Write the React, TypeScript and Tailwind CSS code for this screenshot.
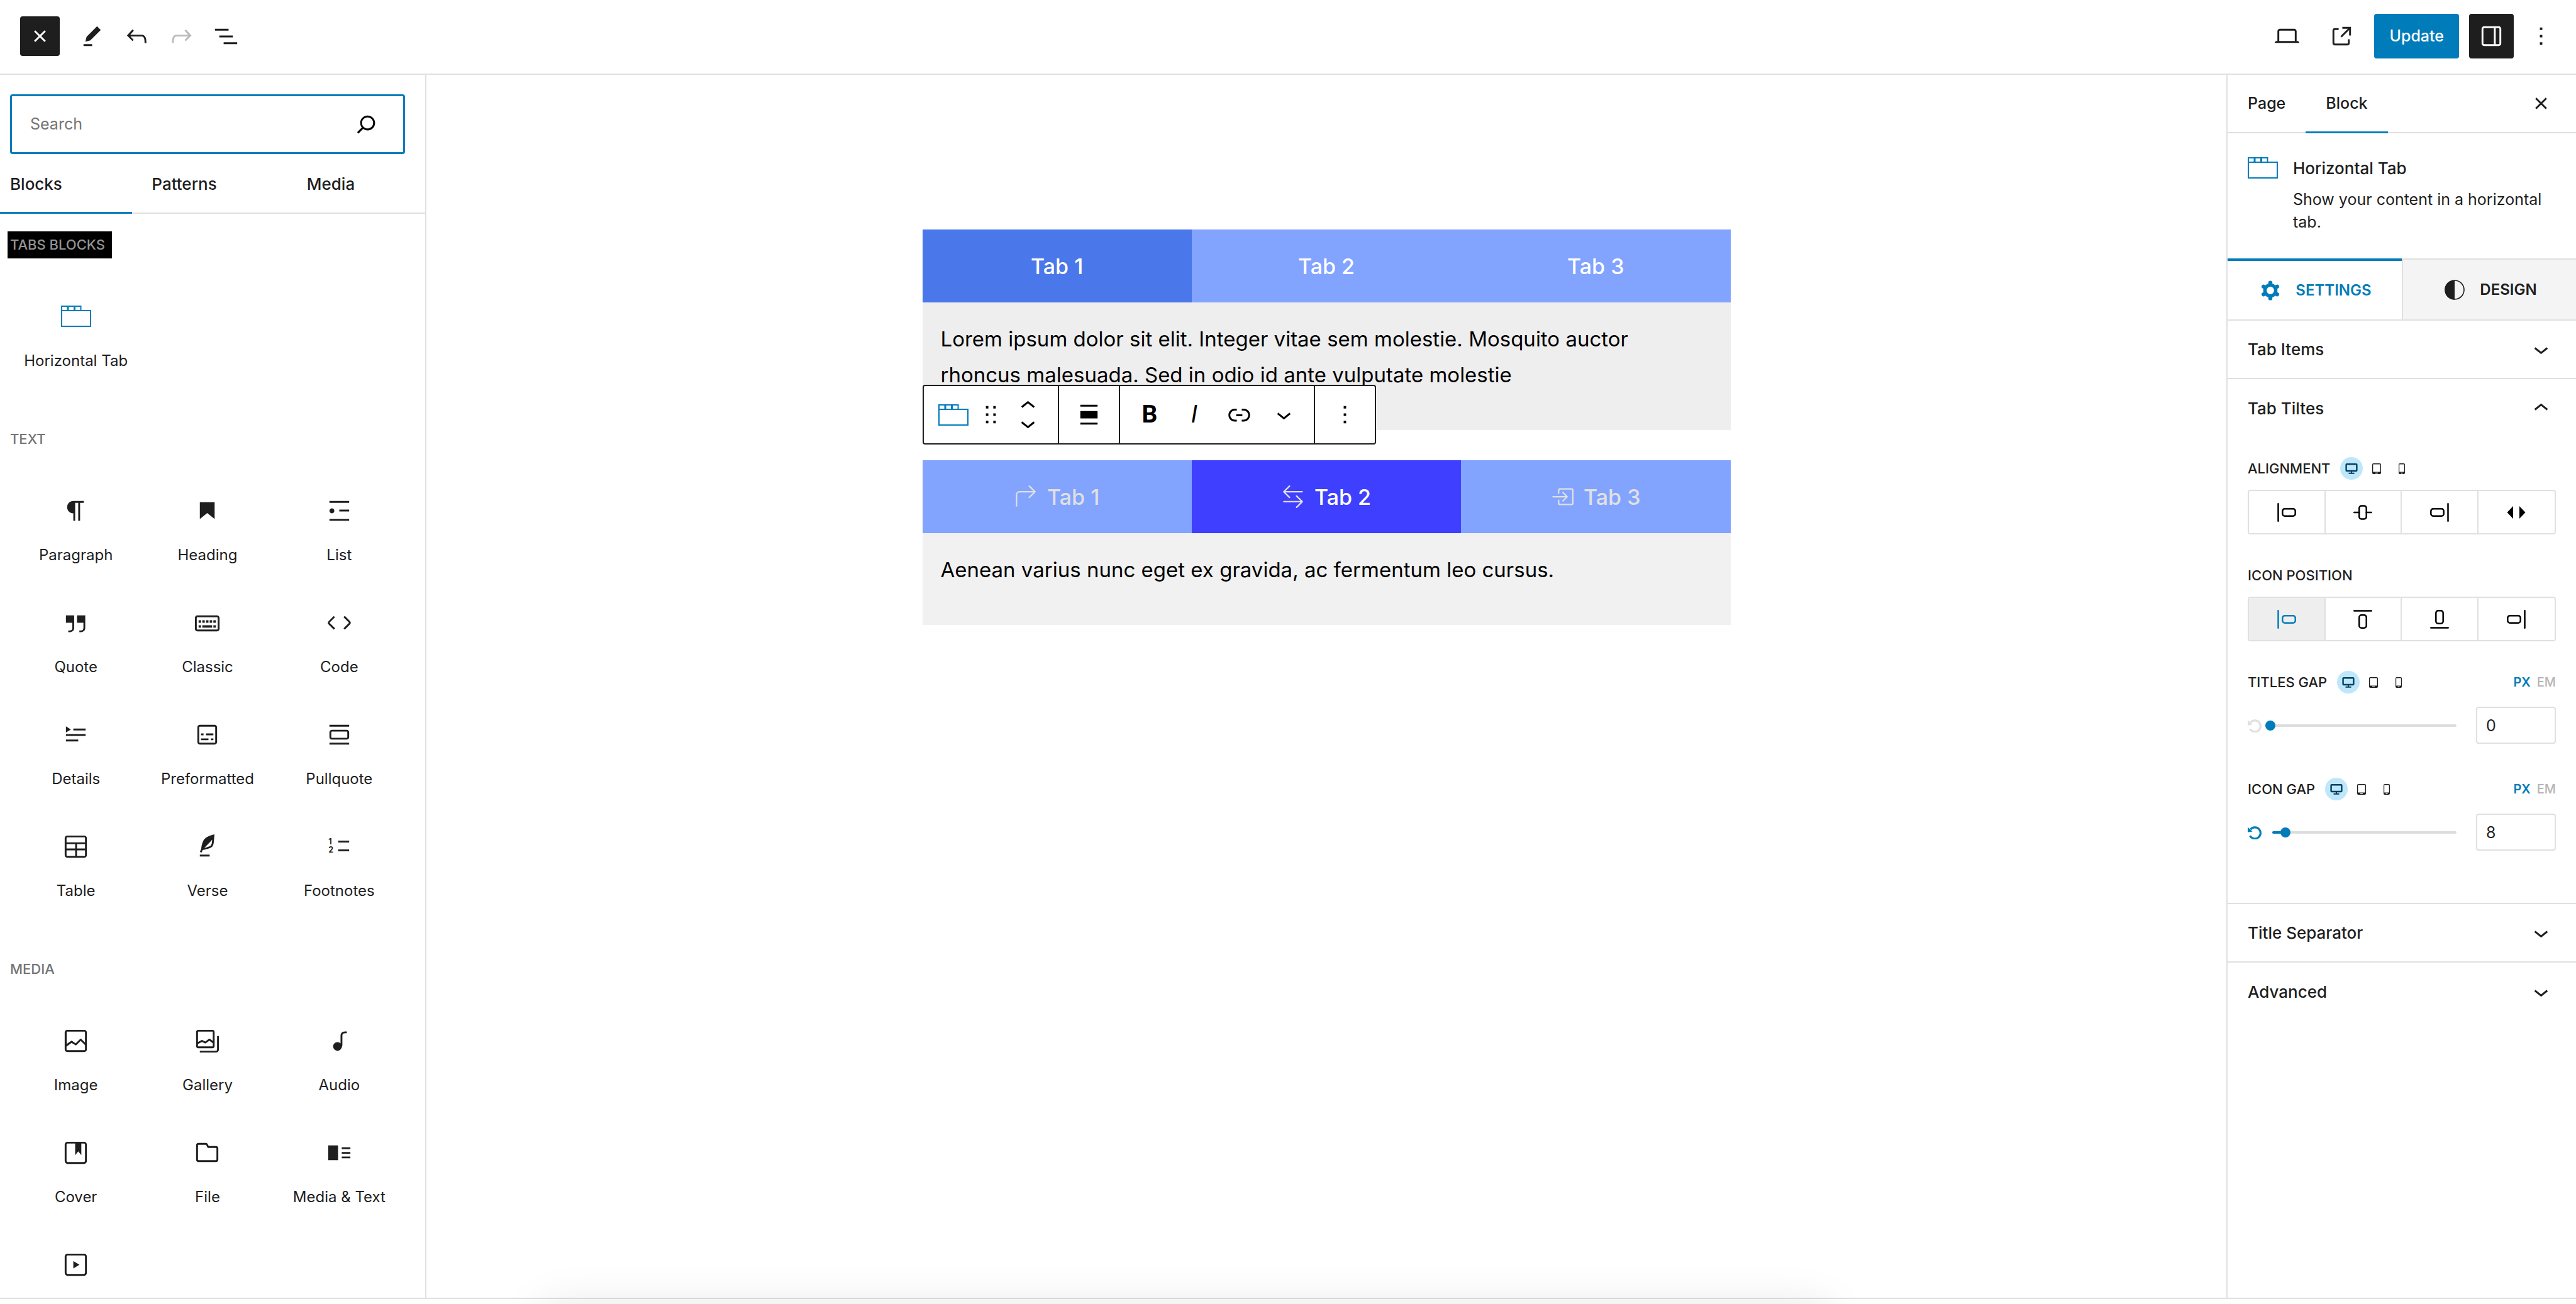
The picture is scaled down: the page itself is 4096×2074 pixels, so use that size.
import { useState } from "react";
import type { ReactNode } from "react";
import { BsArrow90DegRight, BsArrowLeftRight, BsBoxArrowInRight } from "react-icons/bs";

const paths = {
  close:
    "M12 13.06l3.712 3.713 1.061-1.06L13.061 12l3.712-3.712-1.06-1.06L12 10.938 8.288 7.227l-1.061 1.06L10.939 12l-3.712 3.712 1.06 1.061L12 13.061z",
  edit: "m19 7-3-3-8.5 8.5-1 4 4-1L19 7Zm-7 11.5H5V20h7v-1.5Z",
  undo: "M18.3 11.7c-.6-.6-1.4-.9-2.3-.9H6.7l2.9-3.3-1.1-1-4.5 5L8.5 16l1-1-2.7-2.7H16c.5 0 .9.2 1.3.5 1 1 1 3.4 1 4.5v.3h1.5v-.2c0-1.5 0-4.3-1.5-5.7z",
  redo: "M15.6 6.5l-1.1 1 2.9 3.3H8c-.9 0-1.7.3-2.3.9-1.4 1.5-1.4 4.2-1.4 5.6v.2h1.5v-.3c0-1.1 0-3.5 1-4.5.3-.3.7-.5 1.3-.5h9.2L14.5 15l1.1 1.1 4.6-4.6-4.6-5z",
  listView: "M3 6h11v1.5H3V6Zm3.5 5.5h11V13h-11v-1.5ZM21 17H10v1.5h11V17Z",
  laptop:
    "M20.5 16h-.7V8c0-1.1-.9-2-2-2H6.2c-1.1 0-2 .9-2 2v8h-.7c-.8 0-1.5.7-1.5 1.5h20c0-.8-.7-1.5-1.5-1.5zM5.7 8c0-.3.2-.5.5-.5h11.6c.3 0 .5.2.5.5v8H5.7V8z",
  external:
    "M19.5 4.5h-7V6h4.44l-5.97 5.97 1.06 1.06L18 7.06v4.44h1.5v-7Zm-13 1a2 2 0 0 0-2 2v10a2 2 0 0 0 2 2h10a2 2 0 0 0 2-2v-3H17v3a.5.5 0 0 1-.5.5h-10a.5.5 0 0 1-.5-.5v-10a.5.5 0 0 1 .5-.5h3V5.5h-3Z",
  drawer:
    "M18 4H6c-1.1 0-2 .9-2 2v12c0 1.1.9 2 2 2h12c1.1 0 2-.9 2-2V6c0-1.1-.9-2-2-2zm-4 14.5H6c-.3 0-.5-.2-.5-.5V6c0-.3.2-.5.5-.5h8v13zm4.5-.5c0 .3-.2.5-.5.5h-2.5v-13H18c.3 0 .5.2.5.5v12z",
  more: "M13 19h-2v-2h2v2zm0-6h-2v-2h2v2zm0-6h-2V5h2v2z",
  search:
    "M13 5c-3.3 0-6 2.7-6 6 0 1.4.5 2.7 1.3 3.7l-3.8 3.8 1.1 1.1 3.8-3.8c1 .8 2.3 1.3 3.7 1.3 3.3 0 6-2.7 6-6S16.3 5 13 5zm0 10.5c-2.5 0-4.5-2-4.5-4.5s2-4.5 4.5-4.5 4.5 2 4.5 4.5-2 4.5-4.5 4.5z",
  paragraph:
    "m9.99609 14v-.2251l.00391.0001v6.225h1.5v-14.5h2.5v14.5h1.5v-14.5h3v-1.5h-8.50391c-2.76142 0-5 2.23858-5 5 0 2.7614 2.23858 5 5 5z",
  heading: "M6 5V18.5911L12 13.8473L18 18.5911V5H6Z",
  list: "M4 4v1.5h16V4H4zm8 8.5h8V11h-8v1.5zM4 20h16v-1.5H4V20zm4-8c0-1.1-.9-2-2-2s-2 .9-2 2 .9 2 2 2 2-.9 2-2z",
  quote:
    "M13 6v6h5.2v4c0 .8-.2 1.4-.5 1.7-.6.6-1.6.6-2.5.5h-.3v1.5h.5c1 0 2.3-.1 3.3-1 .6-.6 1-1.6 1-2.8V6H13zm-9 6h5.2v4c0 .8-.2 1.4-.5 1.7-.6.6-1.6.6-2.5.5h-.3v1.5h.5c1 0 2.3-.1 3.3-1 .6-.6 1-1.6 1-2.8V6H4v6z",
  classic:
    "M20 6H4c-1.1 0-2 .9-2 2v9c0 1.1.9 2 2 2h16c1.1 0 2-.9 2-2V8c0-1.1-.9-2-2-2zm.5 11c0 .3-.2.5-.5.5H4c-.3 0-.5-.2-.5-.5V8c0-.3.2-.5.5-.5h16c.3 0 .5.2.5.5v9zM10 10H8v2h2v-2zm-5 2h2v-2H5v2zm8-2h-2v2h2v-2zm-5 6h8v-2H8v2zm6-4h2v-2h-2v2zm3 0h2v-2h-2v2zm0 4h2v-2h-2v2zM5 16h2v-2H5v2z",
  code: "M20.8 10.7l-4.3-4.3-1.1 1.1 4.3 4.3c.1.1.1.3 0 .4l-4.3 4.3 1.1 1.1 4.3-4.3c.7-.8.7-1.9 0-2.6zM4.2 11.8l4.3-4.3-1-1-4.3 4.3c-.7.7-.7 1.8 0 2.5l4.3 4.3 1.1-1.1-4.3-4.3c-.2-.1-.2-.3-.1-.4z",
  details: "M4 16h10v1.5H4V16Zm0-4.5h16V13H4v-1.5ZM10 7h10v1.5H10V7ZM4 5.25l4 2.5-4 2.5v-5Z",
  preformatted:
    "M18 4H6c-1.1 0-2 .9-2 2v12c0 1.1.9 2 2 2h12c1.1 0 2-.9 2-2V6c0-1.1-.9-2-2-2zm.5 14c0 .3-.2.5-.5.5H6c-.3 0-.5-.2-.5-.5V6c0-.3.2-.5.5-.5h12c.3 0 .5.2.5.5v12zM7 16.5h6V15H7v1.5zm4-4h6V11h-6v1.5zM9 11H7v1.5h2V11zm6 5.5h2V15h-2v1.5z",
  pullquote:
    "M18 8H6c-1.1 0-2 .9-2 2v4c0 1.1.9 2 2 2h12c1.1 0 2-.9 2-2v-4c0-1.1-.9-2-2-2zm.5 6c0 .3-.2.5-.5.5H6c-.3 0-.5-.2-.5-.5v-4c0-.3.2-.5.5-.5h12c.3 0 .5.2.5.5v4zM4 4v1.5h16V4H4zm0 16h16v-1.5H4V20z",
  table:
    "M19 3H5c-1.1 0-2 .9-2 2v14c0 1.1.9 2 2 2h14c1.1 0 2-.9 2-2V5c0-1.1-.9-2-2-2zM5 4.5h14c.3 0 .5.2.5.5v3.5h-15V5c0-.3.2-.5.5-.5zm8 5.5h6.5v3.5H13V10zm-1.5 3.5h-7V10h7v3.5zm-7 5.5v-4h7v4.5H5c-.3 0-.5-.2-.5-.5zm14.5.5h-6V15h6.5v4c0 .3-.2.5-.5.5z",
  verse:
    "M17.8 2l-.9.3c-.1 0-3.6 1-5.2 2.1C10 5.5 9.3 6.5 8.9 7.1c-.6.9-1.7 4.7-1.7 6.3l-.9 2.3c-.2.4 0 .8.4 1 .1 0 .2.1.3.1.3 0 .6-.2.7-.5l.6-1.5c.3 0 .7-.1 1.2-.2.7-.1 1.4-.3 2.2-.5.8-.2 1.6-.5 2.4-.8.7-.3 1.4-.7 1.9-1.2s.8-1.2 1-1.9c.2-.7.3-1.6.4-2.4.1-.8.1-1.7.2-2.5 0-.8.1-1.5.2-2.1V2zm-1.9 5.6c-.1.8-.2 1.5-.3 2.1-.2.6-.4 1-.6 1.3-.3.3-.8.6-1.4.9-.7.3-1.4.5-2.2.8-.6.2-1.3.3-1.8.4L15 7.5c.3-.3.6-.7 1-1.1 0 .4 0 .8-.1 1.2zM6 20h8v-1.5H6V20z",
  image:
    "M19 3H5c-1.1 0-2 .9-2 2v14c0 1.1.9 2 2 2h14c1.1 0 2-.9 2-2V5c0-1.1-.9-2-2-2zM5 4.5h14c.3 0 .5.2.5.5v8.4l-3-2.9c-.3-.3-.8-.3-1 0L11.9 14 9 12c-.3-.2-.6-.2-.8 0l-3.6 2.6V5c-.1-.3.1-.5.4-.5zm14 15H5c-.3 0-.5-.2-.5-.5v-2.4l4.1-3 3 1.9c.3.2.7.2.9-.1L16 12l3.5 3.4V19c0 .3-.2.5-.5.5z",
  gallery:
    "M16.375 4.5H4.625a.125.125 0 0 0-.125.125v8.254l2.859-1.54a.75.75 0 0 1 .68-.016l2.384 1.142 2.89-2.074a.75.75 0 0 1 .874 0l2.313 1.66V4.625a.125.125 0 0 0-.125-.125Zm.125 9.398-2.75-1.975-2.813 2.02a.75.75 0 0 1-.76.067l-2.444-1.17L4.5 14.583v1.792c0 .069.056.125.125.125h11.75a.125.125 0 0 0 .125-.125v-2.477ZM4.625 3C3.728 3 3 3.728 3 4.625v11.75C3 17.273 3.728 18 4.625 18h11.75c.898 0 1.625-.727 1.625-1.625V4.625C18 3.728 17.273 3 16.375 3H4.625ZM20 8v11c0 .69-.31 1-.999 1H6v1.5h13.001c1.52 0 2.499-.982 2.499-2.5V8H20Z",
  audio:
    "M17.7 4.3c-1.2 0-2.8 0-3.8 1-.6.6-.9 1.5-.9 2.6V14c-.6-.6-1.5-1-2.5-1C8.6 13 7 14.6 7 16.5S8.6 20 10.5 20c1.5 0 2.8-1 3.3-2.3.5-.8.7-1.8.7-2.5V7.9c0-.7.2-1.2.5-1.6.6-.6 1.8-.6 2.8-.6h.3V4.3h-.4z",
  cover:
    "M18.7 3H5.3C4 3 3 4 3 5.3v13.4C3 20 4 21 5.3 21h13.4c1.3 0 2.3-1 2.3-2.3V5.3C21 4 20 3 18.7 3zm.8 15.7c0 .4-.4.8-.8.8H5.3c-.4 0-.8-.4-.8-.8V5.3c0-.4.4-.8.8-.8h6.2v9.4l2.5-3.1 2.5 3.1V4.5h2.2c.4 0 .8.4.8.8v13.4z",
  file: "M12.848 8a1 1 0 0 1-.914-.594l-.723-1.63a.5.5 0 0 0-.447-.276H5a.5.5 0 0 0-.5.5v11.5a.5.5 0 0 0 .5.5h14a.5.5 0 0 0 .5-.5v-9A.5.5 0 0 0 19 8h-6.152Zm.612-1.5a.5.5 0 0 1-.462-.31l-.445-1.084A2 2 0 0 0 10.763 4H5a2 2 0 0 0-2 2v11.5a2 2 0 0 0 2 2h14a2 2 0 0 0 2-2v-9a2 2 0 0 0-2-2h-5.54Z",
  mediaText: "M3 18h8V6H3v12zM14 7.5V9h7V7.5h-7zm0 5.3h7v-1.5h-7v1.5zm0 3.7h7V15h-7v1.5z",
  video:
    "M18.7 3H5.3C4 3 3 4 3 5.3v13.4C3 20 4 21 5.3 21h13.4c1.3 0 2.3-1 2.3-2.3V5.3C21 4 20 3 18.7 3zm.8 15.7c0 .4-.4.8-.8.8H5.3c-.4 0-.8-.4-.8-.8V5.3c0-.4.4-.8.8-.8h13.4c.4 0 .8.4.8.8v13.4zM10 15l5-3-5-3v6z",
  down: "M17.5 11.6L12 16l-5.5-4.4.9-1.2L12 14l4.5-3.6 1 1.2z",
  up: "M6.5 12.4L12 8l5.5 4.4-.9 1.2L12 10l-4.5 3.6-1-1.2z",
  drag: "M8 7h2V5H8v2zm0 6h2v-2H8v2zm0 6h2v-2H8v2zm6-14v2h2V5h-2zm0 8h2v-2h-2v2zm0 6h2v-2h-2v2z",
  align: "M5 4h14v1.5H5V4zm0 14.5h14V20H5v-1.5zM5 9h14v6H5V9z",
  link: "M15.6 7.2H14v1.5h1.6c2 0 3.7 1.7 3.7 3.7s-1.7 3.7-3.7 3.7H14v1.5h1.6c2.8 0 5.2-2.3 5.2-5.2 0-2.9-2.3-5.2-5.2-5.2zM4.7 12.4c0-2 1.7-3.7 3.7-3.7H10V7.2H8.4c-2.9 0-5.2 2.3-5.2 5.2 0 2.9 2.3 5.2 5.2 5.2H10v-1.5H8.4c-2 0-3.7-1.7-3.7-3.7zm4.8.9h5v-1.5h-5v1.5z",
};

type IconName = keyof typeof paths;

function Icon({ name }: { name: IconName }) {
  return (
    <svg viewBox="0 0 24 24" className="size-[47px] shrink-0" fill="currentColor" fillRule="evenodd" aria-hidden="true">
      <path d={paths[name]} />
    </svg>
  );
}

function FootnotesIcon() {
  return (
    <svg viewBox="0 0 24 24" className="size-[47px] shrink-0" fill="currentColor" aria-hidden="true">
      <path d="M11.1 15.8H20v-1.5h-8.9v1.5zm0-8.6v1.5H20V7.2h-8.9z" />
      <text x="3.2" y="10" fontSize="6.4" fontWeight="700">1</text>
      <text x="3.2" y="17" fontSize="6.4" fontWeight="700">2</text>
    </svg>
  );
}

function TabsIcon() {
  return (
    <svg viewBox="0 0 48 34" className="h-[34px] w-12 shrink-0 text-[#007cba]" fill="none" stroke="currentColor" strokeWidth="2" aria-hidden="true">
      <rect x="1" y="8" width="46" height="25" />
      <rect x="1" y="1" width="9.5" height="7" />
      <rect x="11.5" y="1" width="9.5" height="7" />
      <rect x="22" y="1" width="9.5" height="7" />
    </svg>
  );
}

type Side = "left" | "center" | "right" | "top" | "bottom" | "full";

function SideIcon({ side }: { side: Side }) {
  return (
    <svg viewBox="0 0 30 30" className="size-[30px]" fill="none" stroke="currentColor" strokeWidth="2.5" strokeLinecap="round" aria-hidden="true">
      {side === "left" && (
        <>
          <path d="M1.5 1.3v27.4" />
          <rect x="8.3" y="9.3" width="20.4" height="11.4" rx="3.5" />
        </>
      )}
      {side === "right" && (
        <>
          <path d="M28.5 1.3v27.4" />
          <rect x="1.3" y="9.3" width="20.4" height="11.4" rx="3.5" />
        </>
      )}
      {side === "top" && (
        <>
          <path d="M1.3 1.5h27.4" />
          <rect x="9.3" y="8.3" width="11.4" height="20.4" rx="3.5" />
        </>
      )}
      {side === "bottom" && (
        <>
          <path d="M1.3 28.5h27.4" />
          <rect x="9.3" y="1.3" width="11.4" height="20.4" rx="3.5" />
        </>
      )}
      {side === "center" && (
        <>
          <path d="M1.3 15h8M20.7 15h8" />
          <rect x="9.3" y="4.5" width="11.4" height="21" rx="3.5" />
        </>
      )}
      {side === "full" && <path d="M0.5 15 10 5v20zM29.5 15 20 5v20z" fill="currentColor" stroke="none" />}
    </svg>
  );
}

function DeviceSwitch() {
  return (
    <div className="flex items-center gap-1">
      <button aria-label="Desktop" className="flex size-9 items-center justify-center rounded-full bg-[#bfe7fb] text-[#00405f]">
        <svg viewBox="0 0 20 17" className="h-[17px] w-5" fill="none" stroke="currentColor" strokeWidth="2.4" aria-hidden="true">
          <rect x="1.6" y="1.2" width="16.8" height="10.8" rx="1" />
          <path d="M10 12v3M5.5 15.8h9" strokeWidth="2" />
        </svg>
      </button>
      <button aria-label="Tablet" className="flex size-9 items-center justify-center">
        <svg viewBox="0 0 14 17" className="h-[17px] w-[14px]" fill="currentColor" fillRule="evenodd" aria-hidden="true">
          <path d="M2 0h10a2 2 0 0 1 2 2v13a2 2 0 0 1-2 2H2a2 2 0 0 1-2-2V2a2 2 0 0 1 2-2zM1.3 1.6v12h11.4v-12zM5 14.8v1.2h4v-1.2z" />
        </svg>
      </button>
      <button aria-label="Mobile" className="flex size-9 items-center justify-center">
        <svg viewBox="0 0 10 17" className="h-[17px] w-[10px]" fill="currentColor" fillRule="evenodd" aria-hidden="true">
          <path d="M2 0h6a2 2 0 0 1 2 2v13a2 2 0 0 1-2 2H2a2 2 0 0 1-2-2V2a2 2 0 0 1 2-2zM1.2 1.6v12h7.6v-12zM3.5 14.8v1.2h3v-1.2z" />
        </svg>
      </button>
    </div>
  );
}

function ToolButton({ label, children, className = "" }: { label: string; children: ReactNode; className?: string }) {
  return (
    <button aria-label={label} className={`flex h-[71px] w-[71px] items-center justify-center ${className}`}>
      {children}
    </button>
  );
}

function Header() {
  return (
    <header className="flex h-[119px] shrink-0 items-center justify-between border-b-2 border-[#e0e0e0] pr-5 pb-[2px] pl-8">
      <div className="flex items-center gap-5">
        <button aria-label="Toggle block inserter" className="flex size-[63px] items-center justify-center rounded-[4px] bg-[#1e1e1e] text-white">
          <Icon name="close" />
        </button>
        <div className="flex gap-2">
          <button aria-label="Tools" className="flex size-[63px] items-center justify-center"><Icon name="edit" /></button>
          <button aria-label="Undo" className="flex size-[63px] items-center justify-center"><Icon name="undo" /></button>
          <button aria-label="Redo" className="flex size-[63px] items-center justify-center text-[#bbbbbb]"><Icon name="redo" /></button>
          <button aria-label="Document overview" className="flex size-[63px] items-center justify-center"><Icon name="listView" /></button>
        </div>
      </div>
      <div className="flex items-center gap-4">
        <ToolButton label="View"><Icon name="laptop" /></ToolButton>
        <ToolButton label="View page"><Icon name="external" /></ToolButton>
        <button className="h-[71px] rounded-[4px] bg-[#007cba] px-6 text-[25px] font-medium text-white">Update</button>
        <div className="flex items-center gap-2">
          <ToolButton label="Settings" className="rounded-[4px] bg-[#1e1e1e] text-white"><Icon name="drawer" /></ToolButton>
          <ToolButton label="Options"><Icon name="more" /></ToolButton>
        </div>
      </div>
    </header>
  );
}

function BlockItem({ label, icon }: { label: string; icon: ReactNode }) {
  return (
    <button className="flex h-[178px] flex-col items-center pt-12 text-[24px] leading-[30px]">
      <span className="flex h-12 items-center">{icon}</span>
      <span className="mt-8 whitespace-nowrap">{label}</span>
    </button>
  );
}

const textBlocks: { label: string; icon: IconName | "footnotes" }[] = [
  { label: "Paragraph", icon: "paragraph" },
  { label: "Heading", icon: "heading" },
  { label: "List", icon: "list" },
  { label: "Quote", icon: "quote" },
  { label: "Classic", icon: "classic" },
  { label: "Code", icon: "code" },
  { label: "Details", icon: "details" },
  { label: "Preformatted", icon: "preformatted" },
  { label: "Pullquote", icon: "pullquote" },
  { label: "Table", icon: "table" },
  { label: "Verse", icon: "verse" },
  { label: "Footnotes", icon: "footnotes" },
];

const mediaBlocks: { label: string; icon: IconName }[] = [
  { label: "Image", icon: "image" },
  { label: "Gallery", icon: "gallery" },
  { label: "Audio", icon: "audio" },
  { label: "Cover", icon: "cover" },
  { label: "File", icon: "file" },
  { label: "Media & Text", icon: "mediaText" },
];

function Inserter() {
  return (
    <aside className="w-[678px] shrink-0 overflow-hidden border-r-2 border-[#e0e0e0]">
      <div className="pt-[31px] pr-8 pl-4">
        <label className="flex h-[95px] items-center rounded-[4px] border-3 border-[#007cba] pr-[35px] pl-[29px] text-black">
          <input type="search" aria-label="Search" placeholder="Search" className="min-w-0 flex-1 text-[25px] outline-none placeholder:text-[#757575]" />
          <Icon name="search" />
        </label>
      </div>
      <div role="tablist" className="relative flex h-[95px] border-b-2 border-[#e0e0e0] pt-[2px] text-[26px] font-medium">
        <button role="tab" aria-selected="true" className="w-[210px] pl-4 text-left">Blocks</button>
        <button role="tab" aria-selected="false" className="w-[166px]">Patterns</button>
        <button role="tab" aria-selected="false" className="flex-1">Media</button>
        <span className="absolute -bottom-[2px] left-0 h-[3px] w-[210px] bg-[#007cba]" />
      </div>
      <div className="flex flex-col gap-[68px] pt-7 pr-8 pl-4 text-[#1e1e1e]">
        <section>
          <h2 className="-ml-1 flex h-[43px] w-fit items-center bg-black pr-[11px] pl-1 text-[22px] font-medium text-[#949494]">TABS BLOCKS</h2>
          <div className="mt-5 grid grid-cols-3">
            <BlockItem label="Horizontal Tab" icon={<TabsIcon />} />
          </div>
        </section>
        <section>
          <h2 className="flex h-[43px] items-center text-[22px] font-medium text-[#757575]">TEXT</h2>
          <div className="mt-5 grid grid-cols-3">
            {textBlocks.map((b) => (
              <BlockItem key={b.label} label={b.label} icon={b.icon === "footnotes" ? <FootnotesIcon /> : <Icon name={b.icon} />} />
            ))}
          </div>
        </section>
        <section>
          <h2 className="flex h-[43px] items-center text-[22px] font-medium text-[#757575]">MEDIA</h2>
          <div className="mt-5 grid grid-cols-3">
            {mediaBlocks.map((b) => (
              <BlockItem key={b.label} label={b.label} icon={<Icon name={b.icon} />} />
            ))}
            <button aria-label="Video" className="flex h-[125px] flex-col items-center pt-12">
              <span className="flex h-12 items-center"><Icon name="video" /></span>
            </button>
          </div>
        </section>
      </div>
    </aside>
  );
}

function BlockToolbar() {
  return (
    <div role="toolbar" className="absolute bottom-full left-0 mb-[25px] flex h-[95px] divide-x-2 divide-[#1e1e1e] rounded-[4px] border-2 border-[#1e1e1e] bg-white">
      <div className="flex items-center gap-3 pr-6 pl-[23px]">
        <button aria-label="Horizontal Tab"><TabsIcon /></button>
        <button aria-label="Drag"><Icon name="drag" /></button>
        <div className="flex flex-col">
          <button aria-label="Move up" className="flex h-7 items-center"><Icon name="up" /></button>
          <button aria-label="Move down" className="flex h-7 items-center"><Icon name="down" /></button>
        </div>
      </div>
      <div className="flex items-center px-3">
        <ToolButton label="Align"><Icon name="align" /></ToolButton>
      </div>
      <div className="flex items-center px-3">
        <ToolButton label="Bold"><span className="font-['Roboto'] text-[39px] font-bold">B</span></ToolButton>
        <ToolButton label="Italic"><span className="font-['Roboto'] text-[39px] font-normal italic">I</span></ToolButton>
        <ToolButton label="Link"><Icon name="link" /></ToolButton>
        <ToolButton label="More"><Icon name="down" /></ToolButton>
      </div>
      <div className="flex items-center px-3">
        <ToolButton label="Options"><Icon name="more" /></ToolButton>
      </div>
    </div>
  );
}

function Canvas() {
  return (
    <main className="min-w-0 flex-1 pt-[246px]">
      <div className="mx-auto flex max-w-[1285px] flex-col gap-12 text-[34px] leading-[57px] text-black">
        <section>
          <div role="tablist" className="grid h-[116px] grid-cols-3 bg-[#82a4ff] font-medium text-white">
            <button role="tab" aria-selected="true" className="bg-[#4a77e9]">Tab 1</button>
            <button role="tab" aria-selected="false">Tab 2</button>
            <button role="tab" aria-selected="false">Tab 3</button>
          </div>
          <p className="bg-[#eeeeee] pt-[30px] pr-10 pb-[59px] pl-[29px] text-[33px]">
            Lorem ipsum dolor sit elit. Integer vitae sem molestie. Mosquito auctor rhoncus malesuada. Sed in odio id ante vulputate molestie
          </p>
        </section>
        <section className="relative">
          <BlockToolbar />
          <div role="tablist" className="grid h-[116px] grid-cols-3 bg-[#82a4ff] font-medium text-[#e0e0e0]">
            <button role="tab" aria-selected="false" className="flex items-center justify-center gap-4">
              <BsArrow90DegRight className="size-9" />Tab 1
            </button>
            <button role="tab" aria-selected="true" className="flex items-center justify-center gap-4 bg-[#3f3fff]">
              <BsArrowLeftRight className="size-9" /><span className="text-white">Tab 2</span>
            </button>
            <button role="tab" aria-selected="false" className="flex items-center justify-center gap-4">
              <BsBoxArrowInRight className="size-9" />Tab 3
            </button>
          </div>
          <p className="bg-[#f1f1f1] pt-[30px] pr-10 pb-[59px] pl-[29px] text-[33px]">Aenean varius nunc eget ex gravida, ac fermentum leo cursus.</p>
        </section>
      </div>
    </main>
  );
}

function PanelRow({ title, open = false }: { title: string; open?: boolean }) {
  return (
    <button aria-expanded={open} className="flex h-[93px] w-full items-center justify-between px-8 text-[26px] font-medium">
      {title}
      <Icon name={open ? "up" : "down"} />
    </button>
  );
}

function ButtonGroup({ label, sides, active }: { label: string; sides: Side[]; active?: Side }) {
  return (
    <div role="group" aria-label={label} className="grid h-[71px] grid-cols-4 divide-x-2 divide-[#e0e0e0] overflow-hidden rounded-[4px] border-2 border-[#e0e0e0] text-black">
      {sides.map((s) => (
        <button key={s} aria-label={s} className={`flex items-center justify-center ${s === active ? "bg-[#eeeeee] text-[#007cba]" : ""}`}>
          <SideIcon side={s} />
        </button>
      ))}
    </div>
  );
}

function RangeControl({ label, initial }: { label: string; initial: number }) {
  const [value, setValue] = useState(initial);
  return (
    <div className="flex flex-col gap-[21px]">
      <div className="flex h-9 items-center justify-between">
        <div className="flex items-center gap-4">
          <span className="text-[22px] font-medium">{label}</span>
          <DeviceSwitch />
        </div>
        <div className="flex gap-2.5 text-[20px]">
          <button className="font-semibold text-[#007cba]">PX</button>
          <button className="font-medium text-[#b5b5b5]">EM</button>
        </div>
      </div>
      <div className="flex items-center">
        <button aria-label={`Reset ${label}`} onClick={() => setValue(0)} className={value ? "text-[#007cba]" : "text-[#e0e0e0]"}>
          <svg viewBox="0 0 22 22" className="size-[22px]" fill="none" stroke="currentColor" strokeWidth="3.2" aria-hidden="true">
            <path d="M4.4 6.2A9 9 0 1 1 3.6 16.4" />
            <path d="M0 2.6v8.2l7.6-1.2z" fill="currentColor" stroke="none" />
          </svg>
        </button>
        <div className="relative mr-[23px] ml-1.5 flex h-4 flex-1 items-center pr-2 pl-[11px]">
          <div className="h-1 w-full rounded-full bg-[#dddddd]">
            <div className="h-1 rounded-full bg-[#007cba]" style={{ width: `${value}%` }} />
          </div>
          <input
            type="range"
            aria-label={label}
            min={0}
            max={100}
            value={value}
            onChange={(e) => setValue(Number(e.target.value))}
            className="absolute inset-0 h-4 w-full appearance-none bg-transparent [&::-webkit-slider-thumb]:size-4 [&::-webkit-slider-thumb]:appearance-none [&::-webkit-slider-thumb]:rounded-full [&::-webkit-slider-thumb]:bg-[#007cba]"
          />
        </div>
        <input
          type="text"
          aria-label={`${label} value`}
          value={value}
          onChange={(e) => setValue(Number(e.target.value) || 0)}
          className="h-[59px] w-[127px] rounded-[4px] border-2 border-[#e0e0e0] px-[14px] text-[25px]"
        />
      </div>
    </div>
  );
}

function Inspector() {
  return (
    <aside className="w-[556px] shrink-0 overflow-hidden border-l-2 border-[#e0e0e0]">
      <div className="flex h-[93px] items-center justify-between border-b-2 border-[#e0e0e0] pr-8 text-[25px] font-medium">
        <div role="tablist" className="flex self-stretch">
          <button role="tab" aria-selected="false" className="px-8">Page</button>
          <button role="tab" aria-selected="true" className="relative px-8">
            Block
            <span className="absolute inset-x-0 -bottom-[2px] h-[3px] bg-[#007cba]" />
          </button>
        </div>
        <button aria-label="Close settings"><Icon name="close" /></button>
      </div>
      <div className="flex gap-6 px-8 pt-[38px] pb-10">
        <TabsIcon />
        <div className="text-[25px] leading-9">
          <h2 className="text-[26px] font-medium">Horizontal Tab</h2>
          <p className="mt-[13px]">Show your content in a horizontal tab.</p>
        </div>
      </div>
      <div role="tablist" className="grid h-[99px] grid-cols-2 border-b-2 border-[#e0e0e0] text-[24px] font-semibold">
        <button role="tab" aria-selected="true" className="flex items-center justify-center gap-5 border-t-4 border-[#007cba] text-[#007cba]">
          <span className="flex size-10 items-center justify-center">
            <svg viewBox="-16 -16 32 32" className="size-8" fill="none" stroke="currentColor" aria-hidden="true">
              <circle r="8.6" strokeWidth="5.4" />
              <path d="M0-10v-2.4M0 10v2.4M8.7-5l2.1-1.2M8.7 5l2.1 1.2M-8.7-5l-2.1-1.2M-8.7 5l-2.1 1.2" strokeWidth="6.4" strokeLinecap="round" />
            </svg>
          </span>
          SETTINGS
        </button>
        <button role="tab" aria-selected="false" className="flex items-center justify-center gap-5 border-t-2 border-l-2 border-[#e0e0e0] bg-[#f4f4f4]">
          <span className="flex size-10 items-center justify-center">
            <svg viewBox="-16 -16 32 32" className="size-8" aria-hidden="true">
              <circle r="15" fill="none" stroke="currentColor" strokeWidth="1.6" />
              <path d="M0-15.5a15.5 15.5 0 0 0 0 31z" fill="currentColor" />
            </svg>
          </span>
          DESIGN
        </button>
      </div>
      <div className="divide-y-2 divide-[#e0e0e0]">
        <PanelRow title="Tab Items" />
        <div>
          <PanelRow title="Tab Tiltes" open />
          <div className="px-8 pt-[31px] pb-[83px]">
            <div className="flex h-9 items-center gap-4">
              <span className="text-[22px] font-medium">ALIGNMENT</span>
              <DeviceSwitch />
            </div>
            <div className="mt-4">
              <ButtonGroup label="Alignment" sides={["left", "center", "right", "full"]} />
            </div>
            <div className="mt-[47px] flex h-9 items-center">
              <span className="text-[22px] font-medium">ICON POSITION</span>
            </div>
            <div className="mt-4">
              <ButtonGroup label="Icon position" sides={["left", "top", "bottom", "right"]} active="left" />
            </div>
            <div className="mt-[47px] flex flex-col gap-[54px]">
              <RangeControl label="TITLES GAP" initial={0} />
              <RangeControl label="ICON GAP" initial={8} />
            </div>
          </div>
        </div>
        <PanelRow title="Title Separator" />
        <PanelRow title="Advanced" />
      </div>
    </aside>
  );
}

export default function App() {
  return (
    <div className="relative flex h-screen flex-col overflow-hidden bg-white font-['Inter',sans-serif] text-[#1e1e1e]">
      <Header />
      <div className="flex min-h-0 flex-1">
        <Inserter />
        <Canvas />
        <Inspector />
      </div>
      <footer className="h-[10px] shrink-0 border-t-2 border-[#e0e0e0]" />
      <div className="pointer-events-none absolute top-full right-[29%] left-[21%] h-40 shadow-[0_0_70px_rgba(0,0,0,0.09)]" />
    </div>
  );
}
